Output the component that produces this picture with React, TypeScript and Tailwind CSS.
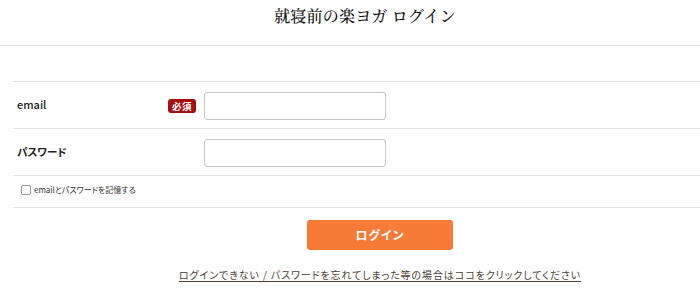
import React from "react";

export default function App() {
  return (
    <div className="w-[700px] h-[291px] overflow-hidden bg-white font-['Noto_Sans_CJK_JP','Noto_Sans',sans-serif] text-[#222]">
      <div className="w-[760px]">
        <div className="w-[730px] h-[45px] flex justify-center pt-[4px]">
          <h1 className="text-[16px] leading-[24px] font-medium text-[#111] font-['Noto_Serif_CJK_JP','Noto_Sans_CJK_JP',serif] tracking-[0.2px]">
            就寝前の楽ヨガ ログイン
          </h1>
        </div>
        <div className="w-[760px] border-t border-[#e4e4e4]" />
        <div className="ml-[13px] w-[734px] mt-[35px] border-t border-[#e4e4e4]">
          <div className="h-[47px] flex items-center border-b border-[#e4e4e4] pl-[4px] pt-[1px]">
            <div className="w-[179px] flex items-center justify-between">
              <span className="text-[11px] font-medium text-[#222] -mt-[2px]">email</span>
              <span className="w-[28px] h-[14px] rounded-[3px] bg-[#a50f0f] text-white text-[9.5px] font-bold leading-[14px] text-center [font-feature-settings:'palt'] tracking-[0.5px]">
                必須
              </span>
            </div>
            <input
              type="text"
              className="ml-[8px] w-[182px] h-[28px] rounded-[3px] border border-[#c8c8c8] bg-white outline-none"
            />
          </div>
          <div className="h-[47px] flex items-center border-b border-[#e4e4e4] pl-[4px] pt-[1px]">
            <div className="w-[179px]">
              <span className="text-[10.5px] font-bold text-[#222] [font-feature-settings:'palt'] -mt-[2px] block">パスワード</span>
            </div>
            <input
              type="password"
              className="ml-[8px] w-[182px] h-[28px] rounded-[3px] border border-[#c8c8c8] bg-white outline-none"
            />
          </div>
          <div className="h-[32px] flex items-center border-b border-[#e4e4e4] pl-[8px] pb-[3px]">
            <span className="w-[10px] h-[10px] rounded-[2px] border border-[#999] bg-white" />
            <span className="ml-[3px] text-[8px] text-[#333] [font-feature-settings:'palt']">
              emailとパスワードを記憶する
            </span>
          </div>
          <div className="flex justify-center pt-[12px]">
            <button className="w-[146px] h-[30px] rounded-[3px] bg-[#f77b36] text-white text-[12px] font-bold tracking-[1px] [font-feature-settings:'palt']">
              ログイン
            </button>
          </div>
          <div className="flex justify-center pt-[18px]">
            <a className="text-[10px] leading-[14px] text-[#4f3f33] underline underline-offset-[2px] [font-feature-settings:'palt'] tracking-[0.9px]">
              ログインできない / パスワードを忘れてしまった等の場合はココをクリックしてください
            </a>
          </div>
        </div>
      </div>
    </div>
  );
}
